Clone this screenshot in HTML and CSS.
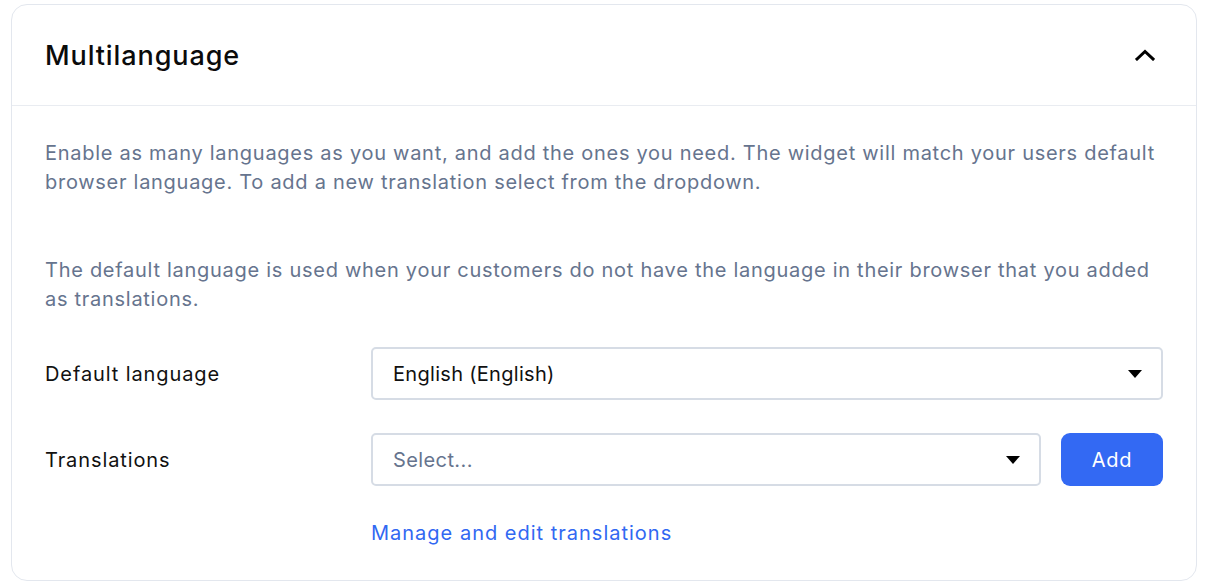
FILE: index.html
```html
<!DOCTYPE html>
<html>
<head>
<meta charset="utf-8">
<link rel="stylesheet" href="styles.css">
</head>
<body>
<section class="card">
  <header class="card-header">
    <h2 class="title">Multilanguage</h2>
    <svg class="chevron" width="20" height="12" viewBox="0 0 20 12"><path d="M2 10 L10 2.5 L18 10" fill="none" stroke="#000" stroke-width="3" stroke-linecap="square"/></svg>
  </header>
  <div class="card-body">
    <p class="desc">Enable as many languages as you want, and add the ones you need. The widget will match your users default browser language. To add a new translation select from the dropdown.</p>
    <p class="desc second">The default language is used when your customers do not have the language in their browser that you added as translations.</p>
    <div class="form-row">
      <label class="label">Default language</label>
      <div class="select"><span class="value">English (English)</span><span class="arrow"></span></div>
    </div>
    <div class="form-row">
      <label class="label">Translations</label>
      <div class="control-group">
        <div class="select"><span class="value placeholder">Select...</span><span class="arrow"></span></div>
        <button class="btn">Add</button>
      </div>
    </div>
    <div class="form-row link-row">
      <span></span>
      <a class="link" href="#">Manage and edit translations</a>
    </div>
  </div>
</section>
</body>
</html>
```
FILE: styles.css
```css
* { box-sizing: border-box; }
html, body { margin: 0; background: #fff; }
body {
  padding: 4px 9px 0 11px;
  font-family: Inter, "Noto Sans", sans-serif;
  color: #111;
}
.card {
  border: 1px solid #e3e7ee;
  border-radius: 16px;
  background: #fff;
}
.card-header {
  height: 101px;
  display: flex;
  align-items: center;
  justify-content: space-between;
  padding: 0 41px 0 33px;
  border-bottom: 1px solid #e9ecf1;
}
.title {
  margin: 0;
  font-size: 27px;
  font-weight: 500;
  letter-spacing: 0.9px;
  color: #0b0b0b;
}
.chevron { display: block; }
.card-body {
  padding: 33px 33px 32px 33px;
}
.desc {
  margin: 0;
  font-size: 20px;
  line-height: 29px;
  letter-spacing: 0.72px;
  color: #66748e;
}
.desc.second { margin-top: 59px; }
.form-row {
  display: grid;
  grid-template-columns: 326px 1fr;
  align-items: center;
  margin-top: 33px;
}
.label {
  font-size: 20px;
  letter-spacing: 0.9px;
  color: #111;
}
.select {
  height: 53px;
  border: 2px solid #d6dce5;
  border-radius: 5px;
  display: flex;
  align-items: center;
  justify-content: space-between;
  padding: 0 19px 0 20px;
  flex: 1;
}
.value { font-size: 20px; letter-spacing: 0.3px; color: #111; }
.value.placeholder { color: #66748e; letter-spacing: 0.4px; }
.arrow {
  width: 0; height: 0;
  border-left: 7.5px solid transparent;
  border-right: 7.5px solid transparent;
  border-top: 8px solid #000;
}
.control-group {
  display: flex;
  gap: 20px;
}
.btn {
  width: 102px;
  height: 53px;
  border: 0;
  border-radius: 9px;
  background: #3369f3;
  color: #fff;
  font-family: inherit;
  font-size: 20px;
  letter-spacing: 0.7px;
}
.link-row { margin-top: 33px; }
.link {
  font-size: 20px;
  line-height: 29px;
  letter-spacing: 1px;
  color: #3168f2;
  text-decoration: none;
}
```
